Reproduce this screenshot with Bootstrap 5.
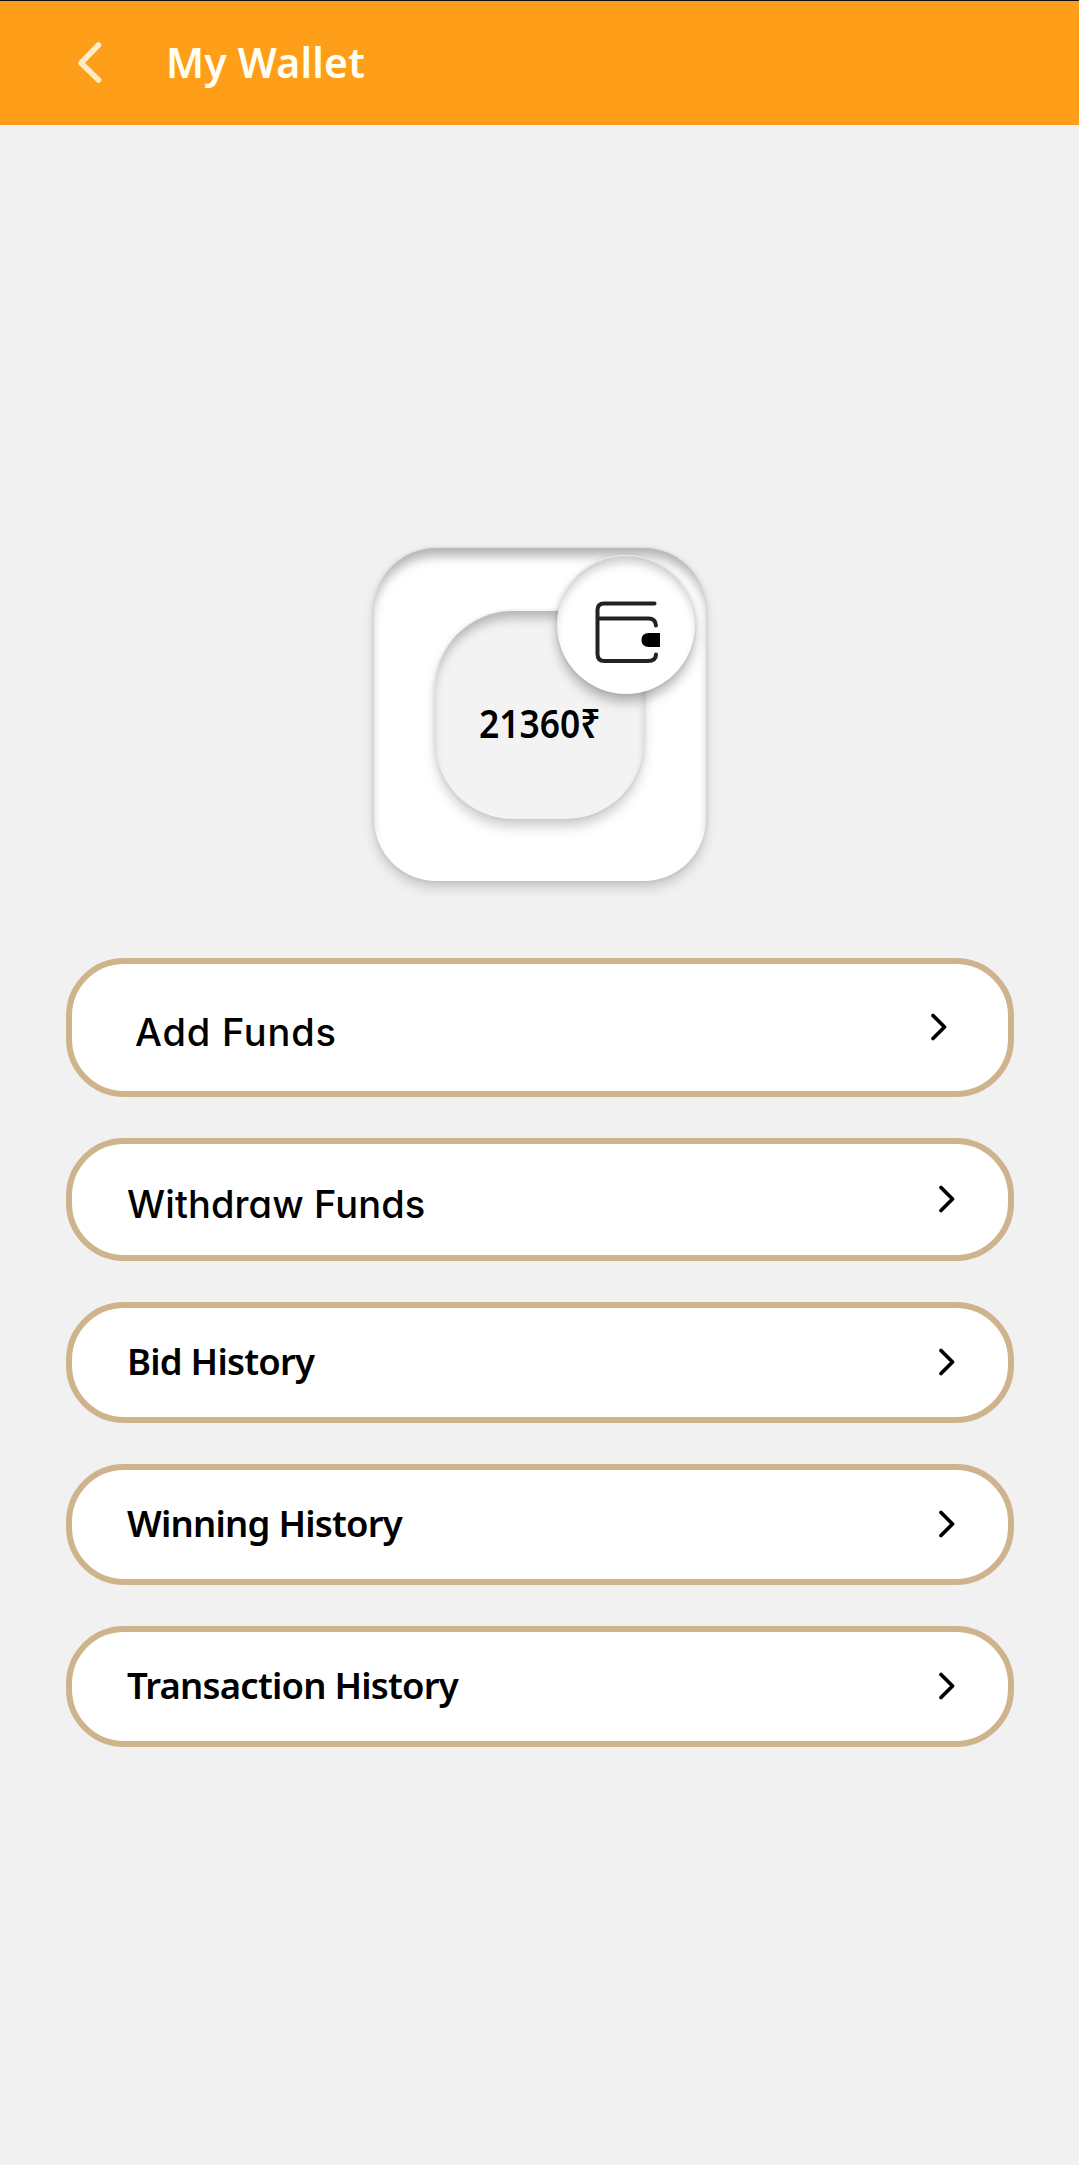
<!DOCTYPE html>
<html lang="en">
<head>
<meta charset="utf-8">
<meta name="viewport" content="width=device-width, initial-scale=1">
<title>My Wallet</title>
<link href="https://cdn.jsdelivr.net/npm/bootstrap@5.3.0/dist/css/bootstrap.min.css" rel="stylesheet">
<style>
  body { background: #f1f1f1; color: #000; font-family: "Noto Sans", "Open Sans", sans-serif; min-height: 2165px; }
  .app-bar { height: 125px; background: #ff9e18; border-top: 1px solid #111; padding: 0 0 0 76px; }
  .app-title { font-size: 41px; font-weight: 600; line-height: 1; color: #fffff4; margin-left: 62px; padding-bottom: 2px; letter-spacing: .2px; }
  .balance-tile { width: 332px; height: 333px; margin-top: 423px; border-radius: 62px; background: #fff;
    box-shadow: 0 7px 12px rgba(0,0,0,.17), 0 0 4px rgba(0,0,0,.12), inset 0 11px 11px -3px rgba(0,0,0,.3); }
  .balance-well { width: 209px; height: 208px; border-radius: 78px; background: #f3f3f3;
    box-shadow: 0 8px 12px rgba(0,0,0,.19), 0 0 4px rgba(0,0,0,.1), inset 0 10px 11px -3px rgba(0,0,0,.26); }
  .balance-amount { font-size: 40px; font-weight: 600; line-height: 1; padding-top: 16px; transform: scaleX(.885); }
  .wallet-badge { width: 138px; height: 138px; top: 8px; right: 11px; background: #fff;
    box-shadow: 0 8px 12px rgba(0,0,0,.27), 0 0 4px rgba(0,0,0,.13), 0 -1px 1px #fff, inset 0 9px 11px -4px rgba(0,0,0,.24); }
  .menu-list { margin-top: 77px; padding: 0 65px 0 66px; gap: 41px; }
  .menu-pill { height: 121px; border: 6px solid #cfb38d; border-radius: 58px; background: #fff; color: #000;
    font-size: 36.5px; font-weight: 600; line-height: 1; letter-spacing: -.78px; text-decoration: none; padding: 0 52px 2px 55px; }
  .round-text { font-family: Inter, sans-serif; font-feature-settings: "cv11"; font-size: 38px; font-weight: 500; letter-spacing: .1px; }
  .round-text span { padding-top: 10px; }
  .pill-mid { height: 123px; }
  .pill-tall { height: 139px; padding: 0 60px 2px 63px; letter-spacing: .8px; }
</style>
<script src="https://cdn.jsdelivr.net/npm/bootstrap@5.3.0/dist/js/bootstrap.bundle.min.js"></script>
</head>
<body>
<header class="app-bar d-flex align-items-center">
  <a href="#" aria-label="Back" class="d-flex"><svg width="28" height="44" viewBox="0 0 28 44" fill="none" stroke="#ffedc8" stroke-width="5.500" stroke-linecap="round" stroke-linejoin="round"><path d="M22.500 4 5 22l17.500 17"/></svg></a>
  <h1 class="app-title mb-0">My Wallet</h1>
</header>
<main class="d-flex flex-column">
  <section class="balance-tile position-relative d-flex align-items-center justify-content-center mx-auto">
    <div class="balance-well d-flex align-items-center justify-content-center">
      <span class="balance-amount">21360₹</span>
    </div>
    <div class="wallet-badge position-absolute rounded-circle">
      <svg width="138" height="138" viewBox="0 0 138 138" fill="none" stroke="#222" stroke-width="4" stroke-linecap="round">
        <path d="M97.500 47.500H47q-6.500 0-6.500 6.500v44q0 7 7 7h43q8.500 0 8.500-6.500M40.500 62.500h51q7 0 7.500 7"/>
        <path d="M103 77H92q-7.500 0-7.500 7t7.500 7h11z" fill="#000" stroke="none"/>
      </svg>
    </div>
  </section>
  <nav class="menu-list d-flex flex-column">
    <a href="#" class="menu-pill round-text pill-tall d-flex align-items-center justify-content-between"><span>Add Funds</span><svg width="18" height="28" viewBox="0 0 18 28" fill="none" stroke="#000" stroke-width="3.700" stroke-linecap="round" stroke-linejoin="round"><path d="M3 2.500l11.500 11.500L3 25.500"/></svg></a>
    <a href="#" class="menu-pill round-text pill-mid d-flex align-items-center justify-content-between"><span>Withdraw Funds</span><svg width="18" height="28" viewBox="0 0 18 28" fill="none" stroke="#000" stroke-width="3.700" stroke-linecap="round" stroke-linejoin="round"><path d="M3 2.500l11.500 11.500L3 25.500"/></svg></a>
    <a href="#" class="menu-pill d-flex align-items-center justify-content-between"><span>Bid History</span><svg width="18" height="28" viewBox="0 0 18 28" fill="none" stroke="#000" stroke-width="3.700" stroke-linecap="round" stroke-linejoin="round"><path d="M3 2.500l11.500 11.500L3 25.500"/></svg></a>
    <a href="#" class="menu-pill d-flex align-items-center justify-content-between"><span>Winning History</span><svg width="18" height="28" viewBox="0 0 18 28" fill="none" stroke="#000" stroke-width="3.700" stroke-linecap="round" stroke-linejoin="round"><path d="M3 2.500l11.500 11.500L3 25.500"/></svg></a>
    <a href="#" class="menu-pill d-flex align-items-center justify-content-between"><span>Transaction History</span><svg width="18" height="28" viewBox="0 0 18 28" fill="none" stroke="#000" stroke-width="3.700" stroke-linecap="round" stroke-linejoin="round"><path d="M3 2.500l11.500 11.500L3 25.500"/></svg></a>
  </nav>
</main>
</body>
</html>
